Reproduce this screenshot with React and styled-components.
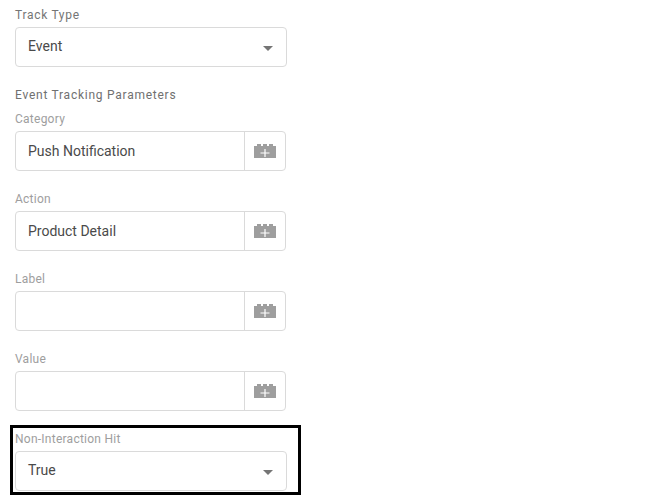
import React from "react";
import styled, { createGlobalStyle } from "styled-components";

const Global = createGlobalStyle`
  html, body { margin: 0; padding: 0; background: #fff; }
  body { font-family: Roboto, "Liberation Sans", sans-serif; }
`;

const Page = styled.div`
  width: 660px;
  height: 504px;
  overflow: hidden;
  box-sizing: border-box;
  padding: 7px 0 0 15px;
  display: flex;
  flex-direction: column;
`;

const Label = styled.div`
  font-size: 12px;
  line-height: 16px;
  height: 16px;
  letter-spacing: ${(p) => (p.$strong ? "0.7px" : "0.25px")};
  color: ${(p) => (p.$strong ? "#757575" : "#9e9e9e")};
  margin-bottom: 4px;
`;

const Heading = styled.div`
  font-size: 12px;
  font-weight: 400;
  line-height: 16px;
  height: 16px;
  letter-spacing: 0.75px;
  color: #707070;
  margin-top: 20px;
  margin-bottom: 8px;
`;

const Select = styled.div`
  width: 272px;
  height: 40px;
  box-sizing: border-box;
  border: 1px solid #dadada;
  border-radius: 4px;
  display: flex;
  align-items: center;
  justify-content: space-between;
  padding: 0 13px 2px 12px;
  font-size: 14px;
  color: #4a4a4a;
`;

const Caret = styled.span`
  width: 0;
  height: 0;
  border-left: 5.5px solid transparent;
  border-right: 5.5px solid transparent;
  border-top: 5.5px solid #757575;
  margin-top: 5px;
`;

const Fields = styled.div`
  display: flex;
  flex-direction: column;
  gap: 20px;
`;

const InputField = styled.div`
  width: 271px;
  height: 40px;
  box-sizing: border-box;
  border: 1px solid #dadada;
  border-radius: 4px;
  display: flex;
  align-items: stretch;
`;

const InputText = styled.div`
  flex: 1;
  display: flex;
  align-items: center;
  padding-left: 12px;
  font-size: 14px;
  color: #4a4a4a;
`;

const VarButton = styled.div`
  width: 40px;
  border-left: 1px solid #dadada;
  display: flex;
  align-items: center;
  justify-content: center;
`;

const Highlight = styled.div`
  box-sizing: border-box;
  width: 291px;
  height: 70px;
  margin: 14px 0 0 -5px;
  border: 3px solid #000;
  padding: 3px 0 0 2px;
`;

const BrickIcon = () => (
  <svg width="22" height="14" viewBox="0 0 22 14">
    <path
      fill="#9e9e9e"
      d="M0 2h3V0h4v2h2V0h4v2h2V0h4v2h3v12H0z"
    />
    <path fill="#fff" d="M10.400 5h1.200v3.400H15.500v1.200h-3.900V13h-1.200V9.600H6.500V8.400h3.900z" />
  </svg>
);

const Field = ({ label, value }) => (
  <div>
    <Label>{label}</Label>
    <InputField>
      <InputText>{value}</InputText>
      <VarButton>
        <BrickIcon />
      </VarButton>
    </InputField>
  </div>
);

export default function App() {
  return (
    <Page>
      <Global />
      <Label $strong>Track Type</Label>
      <Select>
        Event
        <Caret />
      </Select>
      <Heading>Event Tracking Parameters</Heading>
      <Fields>
        <Field label="Category" value="Push Notification" />
        <Field label="Action" value="Product Detail" />
        <Field label="Label" value="" />
        <Field label="Value" value="" />
      </Fields>
      <Highlight>
        <Label>Non-Interaction Hit</Label>
        <Select>
          True
          <Caret />
        </Select>
      </Highlight>
    </Page>
  );
}
